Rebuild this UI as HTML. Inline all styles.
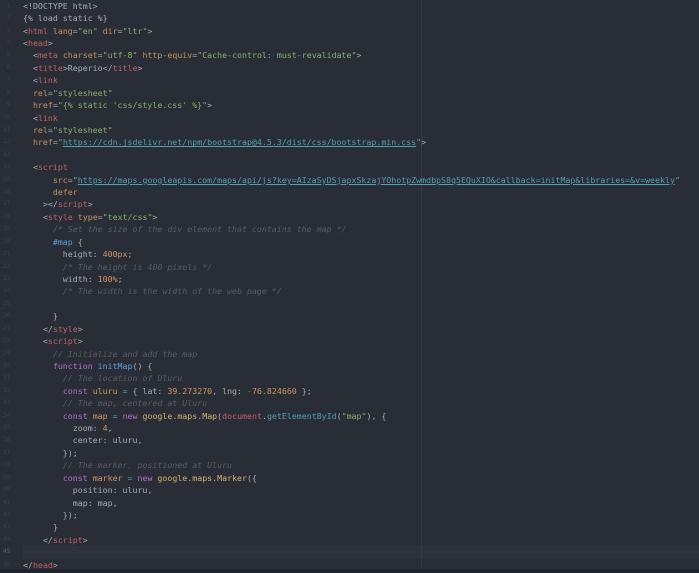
<!DOCTYPE html>
<html lang="en">
<head>
<meta charset="utf-8">
<title>Code editor</title>
<style>
html,body{margin:0;padding:0;width:699px;height:573px;overflow:hidden;background:#282c34}
#wrap{position:relative;width:699px;height:573px;overflow:hidden;background:#292d35;filter:blur(.35px)}
#active{position:absolute;left:23px;right:0;top:546px;height:12.4px;background:#2e323c}
#wrapline{position:absolute;left:420.5px;top:0;width:1px;height:569px;background:#343943}
#status{position:absolute;left:0;right:0;top:569px;height:4px;background:#21252b}
#nums,#code{position:absolute;top:-.3px;white-space:pre;font-family:"DejaVu Sans Mono","Liberation Mono",monospace;line-height:12.42px}
#code{font-size:8.28px}
#nums{left:0;width:10.5px;text-align:right;color:#3b404a;font-size:6.2px}
#code{left:23px;color:#a6acb8}
.t{color:#bf626b}.a{color:#c0925f}.s{color:#8cae70}.c{color:#565c67;font-style:italic}
.u{color:#51a2ae;text-decoration:underline;text-decoration-thickness:.7px;text-underline-offset:1px}
.k{color:#ae73c4}.f{color:#5aa0d8}.n{color:#cc9762}.y{color:#d2b36c}.o{color:#51a2ae}.p{color:#a6acb8}
</style>
</head>
<body>
<div id="wrap">
<div id="active"></div>
<div id="wrapline"></div>
<div id="nums">1
2
3
4
5
6
7
8
9
10
11
12
13
14
15
16
17
18
19
20
21
22
23
24
25
26
27
28
29
30
31
32
33
34
35
36
37
38
39
40
41
42
43
44
<span style="color:#5f6570">45</span>
46</div>
<div id="code">&lt;!DOCTYPE html&gt;
{% load static %}
&lt;<span class="t">html</span> <span class="a">lang</span>=<span class="s">"en"</span> <span class="a">dir</span>=<span class="s">"ltr"</span>&gt;
&lt;<span class="t">head</span>&gt;
  &lt;<span class="t">meta</span> <span class="a">charset</span>=<span class="s">"utf-8"</span> <span class="a">http-equiv</span>=<span class="s">"Cache-control: must-revalidate"</span>&gt;
  &lt;<span class="t">title</span>&gt;Reperio&lt;/<span class="t">title</span>&gt;
  &lt;<span class="t">link</span>
  <span class="a">rel</span>=<span class="s">"stylesheet"</span>
  <span class="a">href</span>=<span class="s">"{% static 'css/style.css' %}"</span>&gt;
  &lt;<span class="t">link</span>
  <span class="a">rel</span>=<span class="s">"stylesheet"</span>
  <span class="a">href</span>=<span class="s">"</span><span class="u">https://cdn.jsdelivr.net/npm/bootstrap@4.5.3/dist/css/bootstrap.min.css</span><span class="s">"</span>&gt;

  &lt;<span class="t">script</span>
      <span class="a">src</span>=<span class="s">"</span><span class="u">https://maps.googleapis.com/maps/api/js?key=AIzaSyDSjapxSkzajYOhotpZwmdbpS8q5EQuXIO&amp;callback=initMap&amp;libraries=&amp;v=weekly</span><span class="s">"</span>
      <span class="a">defer</span>
    &gt;&lt;/<span class="t">script</span>&gt;
    &lt;<span class="t">style</span> <span class="a">type</span>=<span class="s">"text/css"</span>&gt;
      <span class="c">/* Set the size of the div element that contains the map */</span>
      <span class="f">#map</span> {
        height: <span class="n">400px</span>;
        <span class="c">/* The height is 400 pixels */</span>
        width: <span class="n">100%</span>;
        <span class="c">/* The width is the width of the web page */</span>

      }
    &lt;/<span class="t">style</span>&gt;
    &lt;<span class="t">script</span>&gt;
      <span class="c">// Initialize and add the map</span>
      <span class="k">function</span> <span class="f">initMap</span>() {
        <span class="c">// The location of Uluru</span>
        <span class="k">const</span> <span class="n">uluru</span> <span class="o">=</span> { lat: <span class="n">39.273270</span>, lng: <span class="o">-</span><span class="n">76.824660</span> };
        <span class="c">// The map, centered at Uluru</span>
        <span class="k">const</span> <span class="n">map</span> <span class="o">=</span> <span class="k">new</span> <span class="y">google.maps.Map</span>(<span class="t">document</span>.<span class="o">getElementById</span>(<span class="s">"map"</span>), {
          zoom: <span class="n">4</span>,
          center: uluru,
        });
        <span class="c">// The marker, positioned at Uluru</span>
        <span class="k">const</span> <span class="n">marker</span> <span class="o">=</span> <span class="k">new</span> <span class="y">google.maps.Marker</span>({
          position: uluru,
          map: map,
        });
      }
    &lt;/<span class="t">script</span>&gt;

&lt;/<span class="t">head</span>&gt;</div>
<div id="status"></div>
</div>
</body>
</html>
